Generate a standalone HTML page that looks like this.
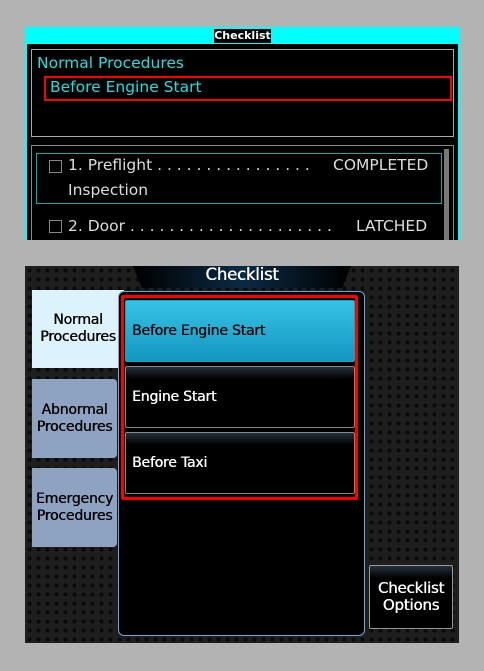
<!DOCTYPE html>
<html><head><meta charset="utf-8"><style>
*{margin:0;padding:0;box-sizing:border-box}
body{width:484px;height:671px;background:#b3b3b3;position:relative;overflow:hidden;font-family:"DejaVu Sans","Liberation Sans",sans-serif}
.a{position:absolute}
.top{left:25px;top:27px;width:435px;height:213px;background:#00ffff}
.tb{left:2px;top:17px;width:431px;height:196px;background:#000;overflow:hidden}
.ttl{left:189px;top:2px;width:57px;height:14px;background:#000;color:#fff;font-size:11px;font-weight:bold;text-align:center;line-height:14px}
.cy{color:#1ce0e0}
.wt{color:#ddd}
.bot{left:25px;top:266px;width:434px;height:377px;background-color:#1e1e1e;background-image:radial-gradient(#0a0a0a 1.8px,transparent 2.3px);background-size:9px 9px;letter-spacing:-0.2px}
.bot div{text-shadow:0.4px 0 0 currentColor}
.tab{color:#000;font-size:14px;text-align:center;line-height:17px;display:flex;align-items:center;justify-content:center}
.btn{left:1px;width:230px;height:62px;border:1px solid #888;border-radius:2px;background:linear-gradient(#24313b 0,#000 12px,#000);color:#fff;font-size:14px;padding-left:6px;display:flex;align-items:center}
</style></head><body>
<div class="a top">
 <div class="a ttl">Checklist</div>
 <div class="a tb">
  <div class="a" style="left:4px;top:5px;width:423px;height:88px;border:1px solid #aaa"></div>
  <div class="a cy" style="left:10px;top:10px;font-size:15.5px">Normal Procedures</div>
  <div class="a" style="left:17px;top:32px;width:408px;height:25px;border:2px solid #f00"></div>
  <div class="a cy" style="left:23px;top:34px;font-size:15.5px">Before Engine Start</div>
  <div class="a" style="left:4px;top:101px;width:423px;height:120px;border:1px solid #888"></div>
  <div class="a" style="left:9px;top:109px;width:406px;height:51px;border:1px solid #1aa"></div>
  <div class="a" style="left:417px;top:105px;width:5px;height:100px;background:#777"></div>
  <div class="a" style="left:22px;top:116px;width:13px;height:13px;border:1px solid #888"></div>
  <div class="a wt" style="left:41px;top:112px;font-size:15.5px;white-space:pre">1. Preflight . . . . . . . . . . . . . . . .</div>
  <div class="a wt" style="left:306px;top:112px;font-size:15.5px">COMPLETED</div>
  <div class="a wt" style="left:41px;top:137px;font-size:15.5px">Inspection</div>
  <div class="a" style="left:22px;top:176px;width:13px;height:13px;border:1px solid #888"></div>
  <div class="a wt" style="left:41px;top:173px;font-size:15.5px;white-space:pre">2. Door . . . . . . . . . . . . . . . . . . . . .</div>
  <div class="a wt" style="left:329px;top:173px;font-size:15.5px">LATCHED</div>
 </div>
</div>
<div class="a bot">
 <div class="a" style="left:108px;top:0;width:218px;height:22px;background:linear-gradient(90deg,#000,#0b2a44 50%,#000);clip-path:polygon(0 0,100% 0,96% 100%,4% 100%);text-shadow:none"></div>
 <div class="a" style="left:108px;top:0;width:218px;height:22px;color:#fff;font-size:16.5px;text-align:center;line-height:18px">Checklist</div>
 <div class="a tab" style="left:7px;top:24px;width:92px;height:78px;background:#dcf2fd">Normal<br>Procedures</div>
 <div class="a tab" style="left:7px;top:113px;width:85px;height:79px;background:#8ea2c2;border-radius:0 4px 4px 0">Abnormal<br>Procedures</div>
 <div class="a tab" style="left:7px;top:202px;width:85px;height:79px;background:#8ea2c2;border-radius:0 4px 4px 0">Emergency<br>Procedures</div>
 <div class="a" style="left:93px;top:25px;width:247px;height:345px;background:#000;border:1.5px solid #6aa8dc;border-radius:6px"></div>
 <div class="a" style="left:96px;top:29px;width:237px;height:205px;border:3px solid #f00;border-radius:2px">
  <div class="a btn" style="top:2px;background:linear-gradient(#36c2e6,#1496c0);border-color:#0ac;color:#000">Before Engine Start</div>
  <div class="a btn" style="top:68px">Engine Start</div>
  <div class="a btn" style="top:134px">Before Taxi</div>
 </div>
 <div class="a" style="left:344px;top:299px;width:84px;height:64px;border:1px solid #999;border-radius:2px;background:linear-gradient(#24313b,#000 12px);color:#fff;font-size:15px;text-align:center;line-height:17px;display:flex;align-items:center;justify-content:center">Checklist<br>Options</div>
</div>
</body></html>
